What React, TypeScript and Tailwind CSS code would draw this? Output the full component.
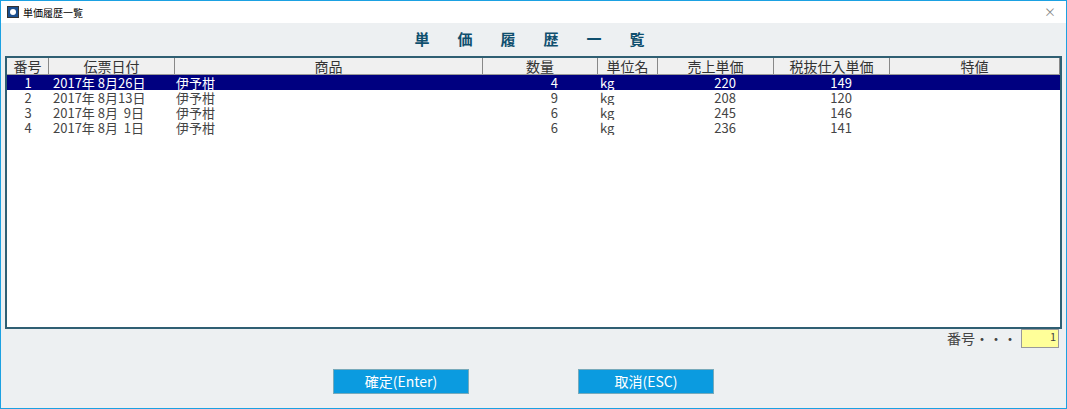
export default function App() {
  const cols = [
    { t: "番号", w: 42 },
    { t: "伝票日付", w: 126 },
    { t: "商品", w: 308 },
    { t: "数量", w: 115 },
    { t: "単位名", w: 60 },
    { t: "売上単価", w: 116 },
    { t: "税抜仕入単価", w: 116 },
    { t: "特値", w: 170 },
  ];
  const rows = [
    ["1", "2017年 8月26日", "4", "220", "149"],
    ["2", "2017年 8月13日", "9", "208", "120"],
    ["3", "2017年 8月  9日", "6", "245", "146"],
    ["4", "2017年 8月  1日", "6", "236", "141"],
  ];
  const f = { fontFamily: '"Noto Sans CJK JP",sans-serif' };
  return (
    <div className="w-[1067px] h-[409px] border border-[#1ba1e2] bg-[#edf0f2] flex flex-col" style={f}>
      <div className="h-[22px] bg-white flex items-center px-[6px] gap-[4px] text-[10px] text-black">
        <div className="w-[12px] h-[12px] bg-[#1a4f8f] border border-[#333] flex items-center justify-center">
          <div className="w-[6px] h-[6px] rounded-full bg-white" />
        </div>
        <span>単価履歴一覧</span>
        <span className="ml-auto mr-[4px] text-[#888] text-[12px]">×</span>
      </div>
      <div className="h-[33px] flex items-center justify-center text-[15px] font-bold text-[#0f4f6e] tracking-[28px] pl-[20px]">単価履歴一覧</div>
      <div className="mx-[4px] h-[273px] border-2 border-[#2f5f73] bg-white flex flex-col text-[13px] text-[#444]">
        <div className="flex h-[17px] leading-[16px] bg-[#f0f0f0] border-b border-[#999] text-[14px]">
          {cols.map((c, i) => (
            <div key={i} className="border-r border-[#888] text-center text-[#333]" style={{ width: c.w }}>{c.t}</div>
          ))}
        </div>
        {rows.map((r, i) => (
          <div key={i} className={"flex h-[15px] leading-[15px] overflow-hidden " + (i === 0 ? "bg-[#000080] text-white" : "")}>
            <div className="w-[42px] text-center">{r[0]}</div>
            <div className="w-[126px] pl-[4px] whitespace-pre">{r[1]}</div>
            <div className="w-[308px] pl-[1px]">伊予柑</div>
            <div className="w-[115px] text-right pr-[40px]">{r[2]}</div>
            <div className="w-[60px] pl-[2px]">kg</div>
            <div className="w-[116px] text-right pr-[38px]">{r[3]}</div>
            <div className="w-[116px] text-right pr-[38px]">{r[4]}</div>
          </div>
        ))}
      </div>
      <div className="flex justify-end items-center mr-[7px] h-[19px] gap-[4px] text-[14px] text-[#444]">
        <span>番号・・・</span>
        <div className="w-[38px] h-[19px] bg-[#ffff99] border border-[#999] text-right pr-[2px] text-[11px] leading-[12px]">1</div>
      </div>
      <div className="flex gap-[109px] pl-[332px] mt-[21px]">
        <div className="w-[136px] h-[25px] bg-[#0b9be0] border border-[#7ab] text-white text-[14px] flex items-center justify-center">確定(Enter)</div>
        <div className="w-[136px] h-[25px] bg-[#0b9be0] border border-[#7ab] text-white text-[14px] flex items-center justify-center">取消(ESC)</div>
      </div>
    </div>
  );
}
